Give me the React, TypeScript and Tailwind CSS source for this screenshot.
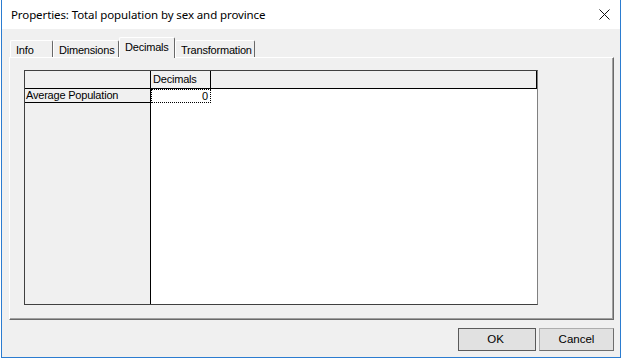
import React from "react";

const ui = { fontFamily: '"Liberation Sans", Arial, sans-serif' };
const title = { fontFamily: '"Noto Sans", "Open Sans", sans-serif' };

function Tab({ label, w, selected }: { label: string; w: string; selected?: boolean }) {
  if (selected) {
    return (
      <div
        className={`${w} h-[21px] -mb-px relative z-10 bg-[#f0f0f0] border-l border-t border-r border-l-white border-t-white border-r-[#696969] rounded-t-[2px] flex items-start pl-[5px] pt-[3px] text-[11px] leading-[13px] tracking-[-0.2px] text-black`}
      >
        {label}
      </div>
    );
  }
  return (
    <div
      className={`${w} h-[17px] bg-[#f0f0f0] border-l border-t border-r border-l-white border-t-white border-r-[#696969] rounded-t-[2px] flex items-start pl-[5px] pt-[3px] text-[11px] leading-[13px] tracking-[-0.2px] text-black`}
    >
      {label}
    </div>
  );
}

export default function App() {
  return (
    <div className="w-[623px] h-[361px] bg-white overflow-hidden">
      <div className="ml-px w-[620px] h-[358px] border border-t-0 border-[#2b7cd0] bg-[#f0f0f0] flex flex-col" style={ui}>
        {/* title bar */}
        <div className="h-[29px] bg-white flex items-center justify-between pl-[9px] pr-[9px]">
          <span className="text-[11.5px] text-black tracking-[-0.1px]" style={title}>
            Properties: Total population by sex and province
          </span>
          <svg width="11" height="11" viewBox="0 0 11 11" className="mr-[1px]">
            <path d="M0.5 0.5 L10.5 10.5 M10.5 0.5 L0.5 10.5" stroke="#111" strokeWidth="1" fill="none" />
          </svg>
        </div>

        {/* tabs */}
        <div className="h-[28px] flex items-end pl-[8px]">
          <Tab label="Info" w="w-[43px]" />
          <Tab label="Dimensions" w="w-[66px]" />
          <Tab label="Decimals" w="w-[56px]" selected />
          <Tab label="Transformation" w="w-[80px]" />
        </div>

        {/* panel */}
        <div className="ml-[7px] w-[605px] h-[263px] border border-t-white border-l-white border-r-[#696969] border-b-[#696969] shadow-[inset_-1px_-1px_0_#a0a0a0]">
          <div className="ml-[14px] mt-[12px] w-[514px] h-[235px] border border-t-[#404040] border-l-[#404040] border-r-[#808080] border-b-[#404040] flex text-[11px] tracking-[-0.2px] text-black">
            {/* fixed column */}
            <div className="w-[126px] h-full bg-[#f0f0f0] border-r border-black flex flex-col">
              <div className="h-[18px] border-b border-black" />
              <div className="h-[14px] border-b border-black pl-px leading-[13px]">Average Population</div>
            </div>
            {/* data area */}
            <div className="flex-1 h-full bg-white flex flex-col">
              <div className="h-[18px] bg-[#f0f0f0] border-b border-black flex">
                <div className="w-[60px] h-full border-r border-black pl-[2px] flex items-center leading-[13px]">Decimals</div>
                <div className="flex-1 h-full border-r border-black" />
              </div>
              <div className="w-[60px] h-[14px] border border-dotted border-black flex items-center justify-end pr-[2px] leading-[12px]">
                0
              </div>
            </div>
          </div>
        </div>

        {/* buttons */}
        <div className="mt-[8px] flex justify-end gap-[3px] pr-[6px]">
          <button className="w-[78px] h-[23px] bg-[#e1e1e1] border border-[#5a5a5a] text-[11.5px] text-black flex items-center justify-center pr-[3px]">
            OK
          </button>
          <button className="w-[75px] h-[23px] bg-[#e1e1e1] border border-t-[#adadad] border-l-[#adadad] border-r-[#6d6d6d] border-b-[#6d6d6d] text-[11.5px] text-black flex items-center justify-center">
            Cancel
          </button>
        </div>
      </div>
    </div>
  );
}
